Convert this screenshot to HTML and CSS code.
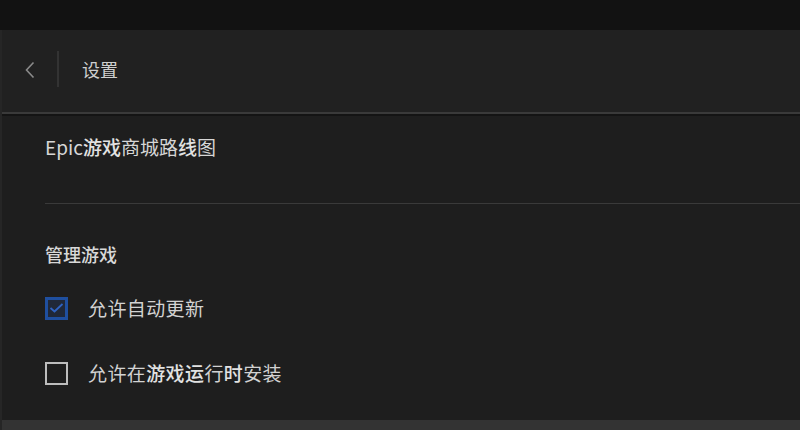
FILE: index.html
```html
<!DOCTYPE html>
<html lang="zh">
<head>
<meta charset="utf-8">
<link rel="stylesheet" href="styles.css">
</head>
<body>
<div class="topbar"></div>
<div class="panel">
  <header class="header">
    <button class="back" aria-label="返回">
      <svg width="12" height="18" viewBox="0 0 12 18"><path d="M9.5 1.5 L2.5 9 L9.5 16.5" fill="none" stroke="#8a8a8a" stroke-width="1.6"/></svg>
    </button>
    <span class="vsep"></span>
    <h1 class="title">设置</h1>
  </header>
  <main class="content">
    <div class="roadmap">Epic<b>游戏</b>商城路<b>线</b>图</div>
    <hr class="divider">
    <h2 class="section">管理游戏</h2>
    <label class="option">
      <span class="box checked">
        <svg width="15" height="12" viewBox="0 0 15 12"><path d="M1.5 6 L5.5 9.5 L13.5 2" fill="none" stroke="#2f63c2" stroke-width="1.8"/></svg>
      </span>
      <span class="label">允许自动更新</span>
    </label>
    <label class="option second">
      <span class="box"></span>
      <span class="label">允许在<b>游戏运</b>行<b>时</b>安装</span>
    </label>
  </main>
  <div class="footer"></div>
</div>
</body>
</html>
```
FILE: styles.css
```css
* { box-sizing: border-box; }
html, body { margin: 0; padding: 0; }
body {
  width: 800px;
  height: 430px;
  overflow: hidden;
  background: #121212;
  font-family: "Noto Sans CJK SC", "Noto Sans", sans-serif;
  color: #d8d8d8;
}
.topbar { height: 30px; background: #121212; }
.panel {
  height: 400px;
  display: flex;
  flex-direction: column;
  background: #1e1e1e;
  border-left: 2px solid #262626;
}
.header {
  height: 84px;
  display: flex;
  align-items: center;
  background: #212121;
  border-bottom: 2px solid #3a3a3a;
  box-shadow: 0 2px 0 #141414;
  padding-left: 20px;
  flex-shrink: 0;
}
.back {
  background: none;
  border: 0;
  padding: 0;
  width: 16px;
  height: 20px;
  display: flex;
  align-items: center;
  justify-content: center;
  margin-top: -2px;
}
.vsep {
  width: 2px;
  height: 36px;
  background: #333;
  margin-left: 19px;
  margin-top: -4px;
}
.title {
  margin: -4px 0 0 23px;
  font-size: 18px;
  font-weight: 400;
  color: #cfcfcf;
}
.content {
  flex: 1;
  padding: 20px 0 0 43px;
  display: flex;
  flex-direction: column;
}
.roadmap {
  font-size: 19px;
  line-height: 26px;
  color: #d6d6d6;
}
.roadmap b, .label b { font-weight: 500; color: #e2e2e2; }
.divider {
  border: 0;
  height: 1px;
  background: #3a3a3a;
  margin: 43px 0 0 0;
}
.section {
  margin: 38px 0 0 0;
  font-size: 18px;
  font-weight: 500;
  line-height: 24px;
  color: #d8d8d8;
}
.option {
  display: flex;
  align-items: center;
  gap: 20px;
  margin-top: 30px;
}
.option.second { margin-top: 41px; }
.box {
  width: 23px;
  height: 23px;
  border: 2px solid #bdbdbd;
  display: flex;
  align-items: center;
  justify-content: center;
  flex-shrink: 0;
}
.box.checked { border: 3px solid #1f4f9f; background: #202838; }
.label {
  font-size: 19px;
  letter-spacing: 0.4px;
  line-height: 24px;
  color: #d2d2d2;
}
.footer {
  height: 10px;
  background: #333;
  flex-shrink: 0;
}
```
